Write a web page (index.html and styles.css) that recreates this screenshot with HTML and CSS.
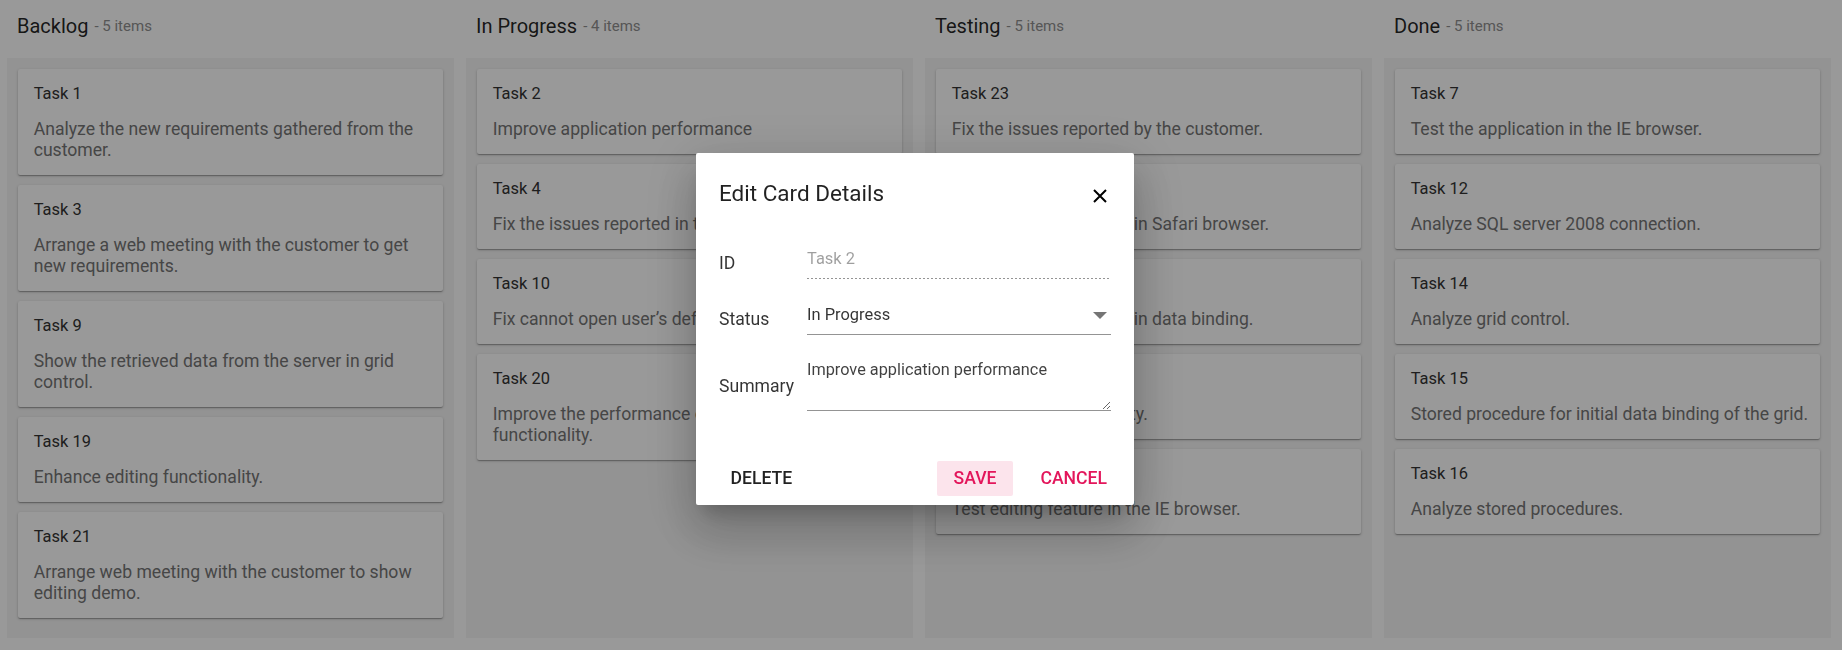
FILE: index.html
```html
<!DOCTYPE html>
<html lang="en">
<head>
<meta charset="utf-8">
<title>Kanban - Edit Card Details</title>
<link rel="stylesheet" href="styles.css">
</head>
<body>
<div class="board">
  <section class="col">
    <header class="col-head"><span class="col-title">Backlog</span><span class="col-count">- 5 items</span></header>
    <div class="col-body">
      <article class="card"><div class="card-title">Task 1</div><p class="card-text">Analyze the new requirements gathered from the customer.</p></article>
      <article class="card"><div class="card-title">Task 3</div><p class="card-text">Arrange a web meeting with the customer to get new requirements.</p></article>
      <article class="card"><div class="card-title">Task 9</div><p class="card-text">Show the retrieved data from the server in grid control.</p></article>
      <article class="card"><div class="card-title">Task 19</div><p class="card-text">Enhance editing functionality.</p></article>
      <article class="card"><div class="card-title">Task 21</div><p class="card-text">Arrange web meeting with the customer to show editing demo.</p></article>
    </div>
  </section>
  <section class="col">
    <header class="col-head"><span class="col-title">In Progress</span><span class="col-count">- 4 items</span></header>
    <div class="col-body">
      <article class="card"><div class="card-title">Task 2</div><p class="card-text">Improve application performance</p></article>
      <article class="card"><div class="card-title">Task 4</div><p class="card-text">Fix the issues reported in the IE browser.</p></article>
      <article class="card"><div class="card-title">Task 10</div><p class="card-text">Fix cannot open user’s default database SQL error.</p></article>
      <article class="card"><div class="card-title">Task 20</div><p class="card-text">Improve the performance of the editing functionality.</p></article>
    </div>
  </section>
  <section class="col">
    <header class="col-head"><span class="col-title">Testing</span><span class="col-count">- 5 items</span></header>
    <div class="col-body">
      <article class="card"><div class="card-title">Task 23</div><p class="card-text">Fix the issues reported by the customer.</p></article>
      <article class="card"><div class="card-title">Task 5</div><p class="card-text">Fix the issues reported in Safari browser.</p></article>
      <article class="card"><div class="card-title">Task 11</div><p class="card-text">Fix the issues reported in data binding.</p></article>
      <article class="card"><div class="card-title">Task 17</div><p class="card-text">Test editing functionality.</p></article>
      <article class="card"><div class="card-title">Task 24</div><p class="card-text">Test editing feature in the IE browser.</p></article>
    </div>
  </section>
  <section class="col">
    <header class="col-head"><span class="col-title">Done</span><span class="col-count">- 5 items</span></header>
    <div class="col-body">
      <article class="card"><div class="card-title">Task 7</div><p class="card-text">Test the application in the IE browser.</p></article>
      <article class="card"><div class="card-title">Task 12</div><p class="card-text">Analyze SQL server 2008 connection.</p></article>
      <article class="card"><div class="card-title">Task 14</div><p class="card-text">Analyze grid control.</p></article>
      <article class="card"><div class="card-title">Task 15</div><p class="card-text">Stored procedure for initial data binding of the grid.</p></article>
      <article class="card"><div class="card-title">Task 16</div><p class="card-text">Analyze stored procedures.</p></article>
    </div>
  </section>
</div>

<div class="overlay"></div>

<div class="dialog" role="dialog" aria-label="Edit Card Details">
  <div class="dlg-head">
    <h2 class="dlg-title">Edit Card Details</h2>
    <button class="dlg-close" type="button" aria-label="Close">
      <svg width="14" height="14" viewBox="0 0 14 14"><path d="M1 1 L13 13 M13 1 L1 13" stroke="#000" stroke-width="2" fill="none"/></svg>
    </button>
  </div>
  <form class="dlg-form">
    <label class="f-label">ID</label>
    <div class="f-field f-disabled"><span class="f-value">Task 2</span></div>
    <label class="f-label">Status</label>
    <div class="f-field f-select"><span class="f-value">In Progress</span>
      <svg class="f-caret" width="14" height="7" viewBox="0 0 14 7"><path d="M0 0 H14 L7 7 Z" fill="#757575"/></svg>
    </div>
    <label class="f-label f-label-area">Summary</label>
    <textarea class="f-area">Improve application performance</textarea>
  </form>
  <div class="dlg-foot">
    <button class="btn" type="button">Delete</button>
    <span class="dlg-spacer"></span>
    <button class="btn btn-primary" type="button">Save</button>
    <button class="btn btn-accent" type="button">Cancel</button>
  </div>
</div>
</body>
</html>
```
FILE: styles.css
```css
html, body {
  margin: 0;
  padding: 0;
}
body {
  background: #fff;
  font-family: Roboto, "Liberation Sans", sans-serif;
  width: 1842px;
  height: 650px;
  overflow: hidden;
}

.board {
  display: grid;
  grid-template-columns: repeat(4, 447px);
  column-gap: 12px;
  padding-left: 7px;
}
.col {
  display: flex;
  flex-direction: column;
}
.col-head {
  display: flex;
  align-items: center;
  height: 24px;
  padding: 14px 10px 20px;
}
.col-title {
  font-size: 20px;
  line-height: 24px;
  color: rgba(0, 0, 0, 0.87);
}
.col-count {
  font-size: 15px;
  line-height: 24px;
  margin-left: 6px;
  color: #8f8f8f;
}
.col-body {
  flex: 1;
  background: #f5f5f5;
  padding: 11px 11px 20px;
  display: flex;
  flex-direction: column;
  gap: 10px;
}
.card {
  background: #fff;
  border-radius: 2px;
  padding: 15.4px 10px 13.6px 15.7px;
  box-shadow: 0 1px 3px 0 rgba(0, 0, 0, 0.2), 0 1px 1px 0 rgba(0, 0, 0, 0.14), 0 2px 1px -1px rgba(0, 0, 0, 0.12);
}
.card-title {
  font-size: 16.45px;
  line-height: 20px;
  color: #333;
}
.card-text {
  margin: 15px 0 0;
  font-size: 17.6px;
  line-height: 21px;
  color: #757575;
}

.overlay {
  position: fixed;
  inset: 0;
  background: rgba(0, 0, 0, 0.4);
}

.dialog {
  position: fixed;
  left: 696px;
  top: 153px;
  width: 438px;
  background: #fff;
  border-radius: 2px;
  box-shadow: 0 13px 18px -8px rgba(0, 0, 0, 0.2), 0 28px 45px 4px rgba(0, 0, 0, 0.14), 0 11px 54px 9px rgba(0, 0, 0, 0.12);
}
.dlg-head {
  display: flex;
  align-items: flex-start;
  justify-content: space-between;
  padding: 25.5px 27px 0 23px;
}
.dlg-title {
  margin: 0;
  font-size: 22.5px;
  line-height: 28px;
  font-weight: 400;
  color: rgba(0, 0, 0, 0.87);
}
.dlg-close {
  border: 0;
  background: none;
  padding: 0;
  width: 14px;
  height: 14px;
  margin-top: 10px;
  display: flex;
}
.dlg-form {
  margin: 40.5px 23.3px 0 23px;
  display: grid;
  grid-template-columns: 88px 1fr;
  row-gap: 24px;
  align-items: center;
}
.f-label {
  font-size: 17.6px;
  line-height: 24px;
  color: rgba(0, 0, 0, 0.8);
}
.f-label-area {
  padding-top: 2px;
}
.f-field {
  display: flex;
  align-items: center;
  height: 24px;
  padding-bottom: 7px;
  border-bottom: 1px solid rgba(0, 0, 0, 0.42);
}
.f-disabled {
  border-bottom: 0;
  padding-bottom: 8px;
  background-image: linear-gradient(90deg, rgba(0, 0, 0, 0.42) 0, rgba(0, 0, 0, 0.42) 40%, transparent 40%);
  background-size: 4px 1px;
  background-repeat: repeat-x;
  background-position: left bottom;
}
.f-value {
  flex: 1;
  font-size: 16.45px;
  line-height: 24px;
  color: rgba(0, 0, 0, 0.8);
}
.f-disabled .f-value {
  color: rgba(0, 0, 0, 0.38);
}
.f-caret {
  margin-right: 4px;
}
.f-area {
  display: block;
  box-sizing: content-box;
  width: 100%;
  height: 40px;
  margin: 1px 0 0;
  padding: 0 0 10px;
  border: 0;
  border-bottom: 1px solid rgba(0, 0, 0, 0.42);
  font-family: Roboto, "Liberation Sans", sans-serif;
  font-size: 16.3px;
  line-height: 20px;
  color: rgba(0, 0, 0, 0.75);
  resize: vertical;
  outline: none;
  background: transparent;
}
.dlg-foot {
  display: flex;
  align-items: center;
  margin-top: 50px;
  padding: 0 10.5px 8.5px 18px;
  gap: 11px;
}
.dlg-spacer {
  flex: 1;
}
.btn {
  border: 0;
  background: transparent;
  border-radius: 2px;
  height: 35px;
  padding: 0 16.5px;
  font-family: Roboto, "Liberation Sans", sans-serif;
  font-size: 17.6px;
  font-weight: 500;
  line-height: 35px;
  text-transform: uppercase;
  color: rgba(0, 0, 0, 0.87);
}
.btn-primary {
  background: #fce4ec;
  color: #e3165b;
}
.btn-accent {
  color: #e3165b;
}
```
